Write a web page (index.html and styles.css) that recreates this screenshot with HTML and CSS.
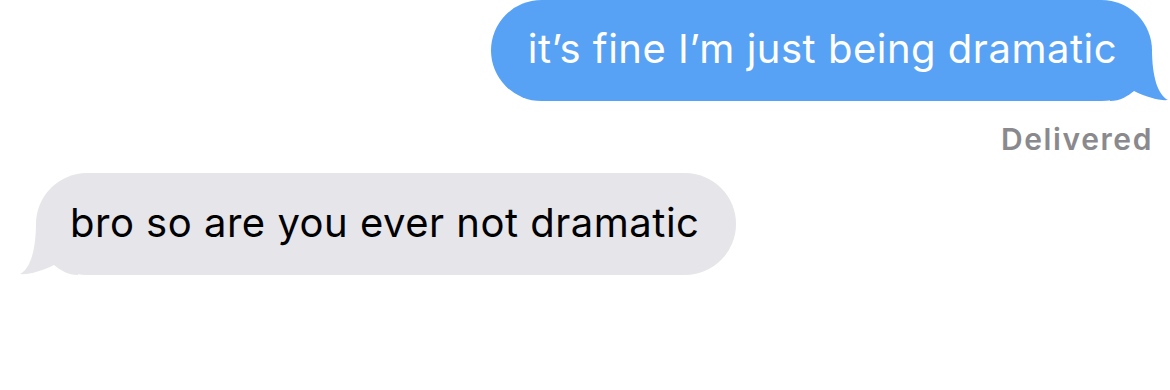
FILE: index.html
```html
<!DOCTYPE html>
<html>
	<head>
		<meta charset="UTF-8">
		<title>Messages</title>
		<link rel="stylesheet" href="styles.css">
	</head>
	<body>
		<div class="chat">
			<div class="msg sent">
				<div class="bubble">it’s fine I’m just being dramatic</div>
				<svg class="tail" width="60" height="52" viewBox="0 0 60 52">
					<path d="M0 0 L42 0 C42 28 48 46 58 51 C50 52 36 48 24 42 C18 47 10 52 0 52 Z"/>
				</svg>
			</div>
			<div class="status">Delivered</div>
			<div class="msg received">
				<div class="bubble">bro so are you ever not dramatic</div>
				<svg class="tail" width="60" height="52" viewBox="0 0 60 52">
					<path d="M0 0 L42 0 C42 28 48 46 58 51 C50 52 36 48 24 42 C18 47 10 52 0 52 Z"/>
				</svg>
			</div>
		</div>
	</body>
</html>
```
FILE: styles.css
```css
* {
	margin: 0;
	padding: 0;
	box-sizing: border-box;
}
body {
	width: 1170px;
	height: 390px;
	background: #fff;
	font-family: Inter, "Liberation Sans", sans-serif;
	overflow: hidden;
}
.chat {
	display: flex;
	flex-direction: column;
}
.msg {
	position: relative;
}
.bubble {
	position: relative;
	z-index: 1;
	height: 101px;
	line-height: 98px;
	border-radius: 51px;
	font-size: 40px;
	letter-spacing: 0.5px;
	white-space: nowrap;
}
.tail {
	position: absolute;
	bottom: 0;
	display: block;
}
.sent {
	align-self: flex-end;
	margin-right: 18px;
}
.sent .bubble {
	background: #58a2f6;
	color: #fff;
	padding: 0 35px 0 37px;
}
.sent .tail {
	right: -18px;
	fill: #58a2f6;
}
.status {
	align-self: flex-end;
	margin: 20px 17px 0 0;
	font-size: 30px;
	line-height: 36px;
	font-weight: 600;
	letter-spacing: 1.6px;
	color: #8a8a8e;
}
.received {
	align-self: flex-start;
	margin: 16px 0 0 36px;
}
.received .bubble {
	background: #e5e5ea;
	color: #000;
	height: 102px;
	line-height: 100px;
	padding: 0 37px 0 34px;
}
.received .tail {
	left: -18px;
	fill: #e5e5ea;
	transform: scaleX(-1);
}
```
